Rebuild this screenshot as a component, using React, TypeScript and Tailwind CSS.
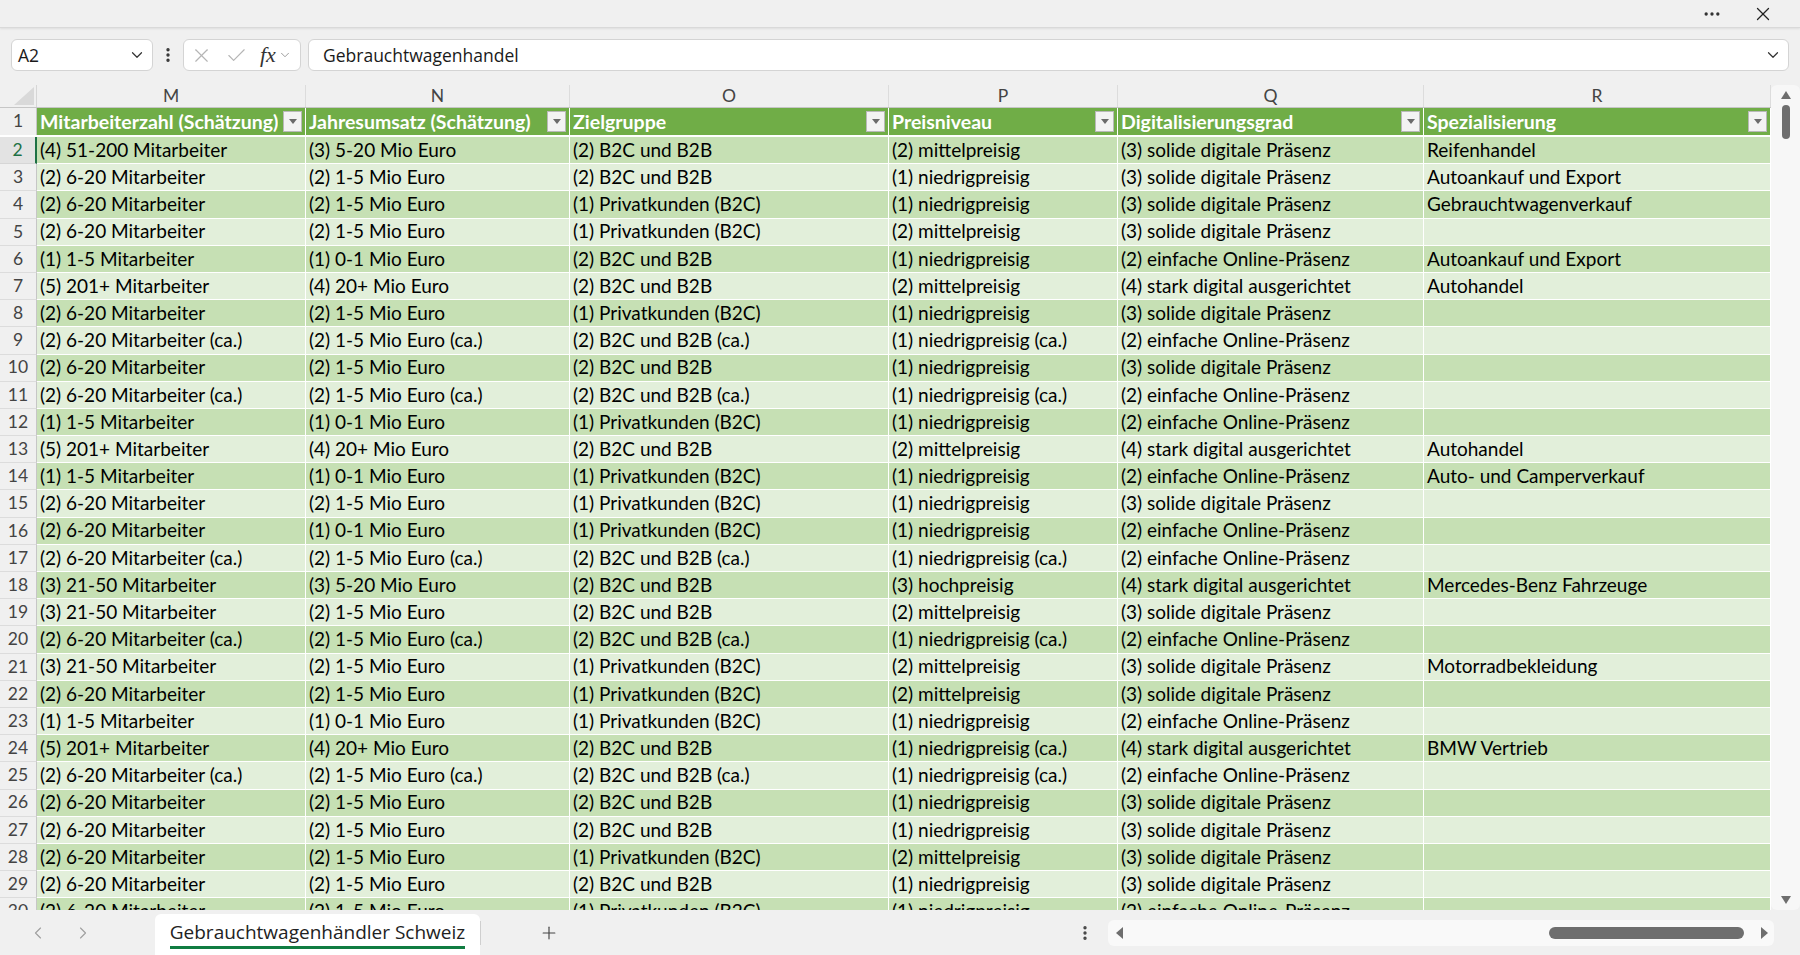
import { Check, ChevronDown, ChevronLeft, ChevronRight, Ellipsis, EllipsisVertical, Plus, X } from 'lucide-react';

const cols = [
  { letter: 'M', title: 'Mitarbeiterzahl (Schätzung)', w: 'w-[269px]' },
  { letter: 'N', title: 'Jahresumsatz (Schätzung)', w: 'w-[264px]' },
  { letter: 'O', title: 'Zielgruppe', w: 'w-[319px]' },
  { letter: 'P', title: 'Preisniveau', w: 'w-[229px]' },
  { letter: 'Q', title: 'Digitalisierungsgrad', w: 'w-[306px]' },
  { letter: 'R', title: 'Spezialisierung', w: 'w-[347px]' },
];

const M2 = '(2) 6-20 Mitarbeiter';
const M2c = '(2) 6-20 Mitarbeiter (ca.)';
const M1 = '(1) 1-5 Mitarbeiter';
const M3 = '(3) 21-50 Mitarbeiter';
const M5 = '(5) 201+ Mitarbeiter';
const N2 = '(2) 1-5 Mio Euro';
const N2c = '(2) 1-5 Mio Euro (ca.)';
const N1 = '(1) 0-1 Mio Euro';
const N3 = '(3) 5-20 Mio Euro';
const N4 = '(4) 20+ Mio Euro';
const B2 = '(2) B2C und B2B';
const B2c = '(2) B2C und B2B (ca.)';
const PK = '(1) Privatkunden (B2C)';
const lo = '(1) niedrigpreisig';
const loc = '(1) niedrigpreisig (ca.)';
const mid = '(2) mittelpreisig';
const sol = '(3) solide digitale Präsenz';
const ein = '(2) einfache Online-Präsenz';
const stark = '(4) stark digital ausgerichtet';

const rows: string[][] = [
  ['(4) 51-200 Mitarbeiter', N3, B2, mid, sol, 'Reifenhandel'],
  [M2, N2, B2, lo, sol, 'Autoankauf und Export'],
  [M2, N2, PK, lo, sol, 'Gebrauchtwagenverkauf'],
  [M2, N2, PK, mid, sol, ''],
  [M1, N1, B2, lo, ein, 'Autoankauf und Export'],
  [M5, N4, B2, mid, stark, 'Autohandel'],
  [M2, N2, PK, lo, sol, ''],
  [M2c, N2c, B2c, loc, ein, ''],
  [M2, N2, B2, lo, sol, ''],
  [M2c, N2c, B2c, loc, ein, ''],
  [M1, N1, PK, lo, ein, ''],
  [M5, N4, B2, mid, stark, 'Autohandel'],
  [M1, N1, PK, lo, ein, 'Auto- und Camperverkauf'],
  [M2, N2, PK, lo, sol, ''],
  [M2, N1, PK, lo, ein, ''],
  [M2c, N2c, B2c, loc, ein, ''],
  [M3, N3, B2, '(3) hochpreisig', stark, 'Mercedes-Benz Fahrzeuge'],
  [M3, N2, B2, mid, sol, ''],
  [M2c, N2c, B2c, loc, ein, ''],
  [M3, N2, PK, mid, sol, 'Motorradbekleidung'],
  [M2, N2, PK, mid, sol, ''],
  [M1, N1, PK, lo, ein, ''],
  [M5, N4, B2, loc, stark, 'BMW Vertrieb'],
  [M2c, N2c, B2c, loc, ein, ''],
  [M2, N2, B2, lo, sol, ''],
  [M2, N2, B2, lo, sol, ''],
  [M2, N2, PK, mid, sol, ''],
  [M2, N2, B2, lo, sol, ''],
  [M2, N2, PK, lo, ein, ''],
];

function FilterButton() {
  return (
    <span className="mr-[3px] flex h-[21px] w-[19px] shrink-0 items-center justify-center border border-[#b9b9b9] bg-[#f3f3f3]">
      <svg width="8" height="5" viewBox="0 0 8 5">
        <path d="M0 0h8L4 5z" fill="#6b6b6b" />
      </svg>
    </span>
  );
}

export default function App() {
  return (
    <div className="flex h-[955px] w-[1800px] flex-col overflow-hidden bg-[#f0f0f0] font-['Lato',sans-serif] text-black">
      {/* title strip */}
      <div className="flex h-[28px] shrink-0 items-center justify-end gap-[30px] border-b border-[#d9d9d9] pr-[26px] shadow-[0_1px_2px_rgba(0,0,0,0.08)]">
        <Ellipsis size={20} strokeWidth={2} className="text-[#333]" />
        <X size={22} strokeWidth={1.4} className="text-[#222]" />
      </div>

      {/* formula bar */}
      <div className="flex h-[57px] shrink-0 items-start px-[11px] pt-[11px] font-['Open_Sans',sans-serif]">
        <div className="flex h-[32px] w-[142px] items-center justify-between rounded-[6px] border border-[#d4d4d4] bg-white pl-[6px] pr-[6px] text-[17.5px] text-[#1a1a1a]">
          <span>A2</span>
          <ChevronDown size={18} strokeWidth={1.6} className="text-[#333]" />
        </div>
        <div className="flex h-[32px] w-[30px] items-center justify-center">
          <EllipsisVertical size={18} strokeWidth={2.5} className="text-[#333]" />
        </div>
        <div className="flex h-[32px] w-[118px] items-center rounded-[6px] border border-[#d4d4d4] bg-white pl-[6px]">
          <X size={23} strokeWidth={1.2} className="text-[#b5b5b5]" />
          <Check size={23} strokeWidth={1.2} className="ml-[12px] text-[#b5b5b5]" />
          <span className="ml-[12px] font-['Liberation_Serif',serif] text-[22px] italic leading-none text-[#333]">fx</span>
          <ChevronDown size={14} strokeWidth={1.4} className="ml-[2px] text-[#888]" />
        </div>
        <div className="ml-[7px] flex h-[32px] flex-1 items-center justify-between rounded-[6px] border border-[#d4d4d4] bg-white pl-[14px] pr-[6px] text-[17.5px] text-[#1a1a1a]">
          <span>Gebrauchtwagenhandel</span>
          <ChevronDown size={18} strokeWidth={1.6} className="text-[#333]" />
        </div>
      </div>

      {/* sheet grid */}
      <div className="flex min-h-0 flex-1">
        <div className="w-[1771px] overflow-hidden">
          {/* column letters */}
          <div className="flex h-[23px] border-b border-[#c6c6c6] bg-[#f0f0f0] text-[17.5px] text-[#444]">
            <div className="relative w-[37px] shrink-0 border-r border-[#d6d6d6]">
              <svg className="absolute bottom-[2px] right-[2px]" width="20" height="18" viewBox="0 0 20 18">
                <path d="M20 0V18H0z" fill="#d9d9d9" />
              </svg>
            </div>
            {cols.map((c) => (
              <div key={c.letter} className={`${c.w} flex shrink-0 items-center justify-center border-r border-[#dcdcdc]`}>
                {c.letter}
              </div>
            ))}
          </div>

          {/* header row */}
          <div className="flex h-[29px] border-b-2 border-white">
            <div className="flex w-[37px] shrink-0 items-center justify-center border-r border-[#c6c6c6] bg-[#f0f0f0] text-[17.5px] text-[#444]">
              1
            </div>
            {cols.map((c) => (
              <div
                key={c.letter}
                className={`${c.w} flex shrink-0 items-center justify-between border-r border-white bg-[#70ad47] pl-[3px] text-[19.5px] font-bold text-white`}
              >
                <span className="truncate">{c.title}</span>
                <FilterButton />
              </div>
            ))}
          </div>

          {/* data rows */}
          {rows.map((r, i) => {
            const n = i + 2;
            const band = n % 2 === 0 ? 'bg-[#c6e0b4]' : 'bg-[#e2efda]';
            const sel = n === 2;
            return (
              <div key={n} className="flex h-[27.2px]">
                <div
                  className={
                    sel
                      ? 'flex w-[37px] shrink-0 items-center justify-center border-b border-r-2 border-b-[#d6d6d6] border-r-[#1e7145] bg-[#e3e3e3] text-[17.5px] text-[#1e7145]'
                      : 'flex w-[37px] shrink-0 items-center justify-center border-b border-r border-b-[#dcdcdc] border-r-[#c6c6c6] bg-[#f0f0f0] text-[17.5px] text-[#444]'
                  }
                >
                  {n}
                </div>
                {r.map((v, j) => (
                  <div
                    key={j}
                    className={`${cols[j].w} ${band} flex shrink-0 items-center overflow-hidden whitespace-nowrap border-b border-r border-white pl-[3px] text-[19px]`}
                  >
                    {v}
                  </div>
                ))}
              </div>
            );
          })}
        </div>

        {/* vertical scrollbar */}
        <div className="flex w-[29px] shrink-0 flex-col items-center rounded-[6px] bg-[#f7f7f7] py-[6px]">
          <svg width="10" height="8" viewBox="0 0 10 8">
            <path d="M5 0L10 8H0z" fill="#6e6e6e" />
          </svg>
          <div className="mt-[6px] h-[34px] w-[8px] rounded-full bg-[#6e6e6e]" />
          <div className="flex-1" />
          <svg width="10" height="8" viewBox="0 0 10 8">
            <path d="M0 0H10L5 8z" fill="#6e6e6e" />
          </svg>
        </div>
      </div>

      {/* sheet tabs */}
      <div className="flex h-[45px] shrink-0 items-center font-['Open_Sans',sans-serif]">
        <ChevronLeft size={20} strokeWidth={1.4} className="ml-[28px] text-[#a0a0a0]" />
        <ChevronRight size={20} strokeWidth={1.4} className="ml-[25px] text-[#a0a0a0]" />
        <div className="ml-[62px] flex h-[41px] w-[325px] flex-col items-center justify-center self-end rounded-t-[6px] bg-white">
          <span className="border-b-[3px] border-[#107c41] pb-[1px] text-[19px] leading-[25px] text-[#222]">
            Gebrauchtwagenhändler Schweiz
          </span>
        </div>
        <div className="h-[24px] w-px bg-[#cfcfcf]" />
        <Plus size={20} strokeWidth={1.4} className="ml-[58px] text-[#444]" />
        <EllipsisVertical size={18} strokeWidth={2.5} className="ml-[517px] text-[#444]" />
        <div className="ml-[14px] flex h-[26px] flex-1 items-center rounded-[6px] bg-[#f9f9f9] pl-[8px] pr-[6px]">
          <svg width="7" height="12" viewBox="0 0 7 12">
            <path d="M7 0V12L0 6z" fill="#6e6e6e" />
          </svg>
          <div className="flex-1" />
          <div className="h-[12px] w-[195px] rounded-full bg-[#6e6e6e]" />
          <svg className="ml-[17px]" width="7" height="12" viewBox="0 0 7 12">
            <path d="M0 0V12L7 6z" fill="#6e6e6e" />
          </svg>
        </div>
        <div className="w-[26px]" />
      </div>
    </div>
  );
}
